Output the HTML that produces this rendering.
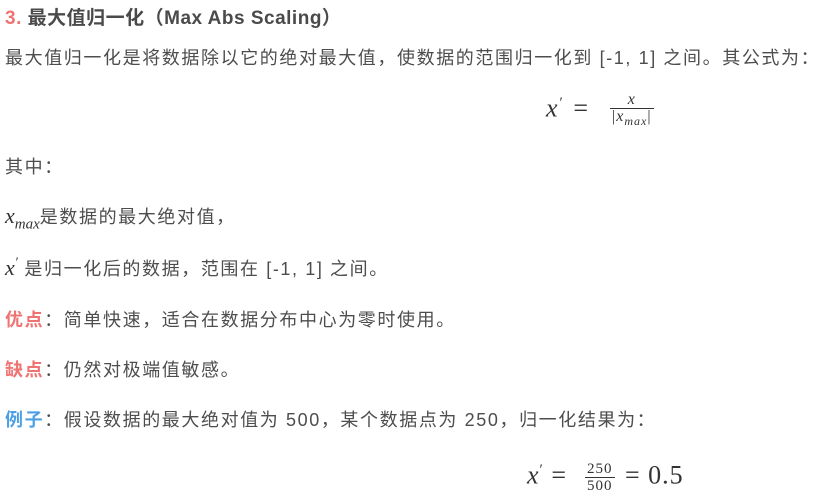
<!DOCTYPE html>
<html><head><meta charset="utf-8"><style>
body{margin:0;width:817px;height:490px;background:#fff;overflow:hidden;position:relative;font-family:"Liberation Sans","Noto Sans CJK SC",sans-serif;color:#4d4d4d;}
.l{position:absolute;left:5px;font-size:18px;letter-spacing:1.6px;white-space:nowrap;line-height:24px;}
.t{font-weight:bold;font-size:19px;letter-spacing:0.5px;color:#4a4a4a}
.r{color:#ef7373;font-weight:bold}
.b{color:#4da0e6;font-weight:bold}
.m{font-family:"Liberation Serif","DejaVu Serif",serif;font-style:italic;letter-spacing:0;color:#333;line-height:0}
.f{position:absolute;font-family:"Liberation Serif","DejaVu Serif",serif;color:#333;font-size:26px;white-space:nowrap;line-height:30px}
.fr{display:inline-block;vertical-align:middle;text-align:center;font-size:15px;line-height:16px;margin:0 3px}
.fr span{display:block;padding:0 2px}
</style></head><body>
<div class="l t" style="top:7px"><span style="color:#ef7373">3.</span> 最大值归一化（Max Abs Scaling）</div>
<div class="l" style="top:46px">最大值归一化是将数据除以它的绝对最大值，使数据的范围归一化到 [-1, 1] 之间。其公式为：</div>
<div class="f" style="left:546px;top:88px;letter-spacing:2px"><i>x</i><sup style="font-size:15px">′</sup>&nbsp;=&nbsp;&nbsp;<span class="fr" style="font-size:16px;letter-spacing:1px"><span style="border-bottom:1px solid #333"><i>x</i></span><span>|<i>x<sub style="font-size:12px">max</sub></i>|</span></span></div>
<div class="l" style="top:155px">其中：</div>
<div class="l" style="top:205px"><span class="m" style="font-size:22px">x<sub style="font-size:15px">max</sub></span>是数据的最大绝对值，</div>
<div class="l" style="top:257px"><span class="m" style="font-size:22px">x<sup style="font-size:14px">′</sup></span>&nbsp;是归一化后的数据，范围在 [-1, 1] 之间。</div>
<div class="l" style="top:308px"><span class="r">优点</span>：简单快速，适合在数据分布中心为零时使用。</div>
<div class="l" style="top:358px"><span class="r">缺点</span>：仍然对极端值敏感。</div>
<div class="l" style="top:408px"><span class="b">例子</span>：假设数据的最大绝对值为 500，某个数据点为 250，归一化结果为：</div>
<div class="f" style="left:527px;top:455px;letter-spacing:1px"><i>x</i><sup style="font-size:15px">′</sup>&nbsp;=&nbsp;&nbsp;<span class="fr"><span style="border-bottom:1px solid #333">250</span><span>500</span></span>&nbsp;=&nbsp;0.5</div>
</body></html>
